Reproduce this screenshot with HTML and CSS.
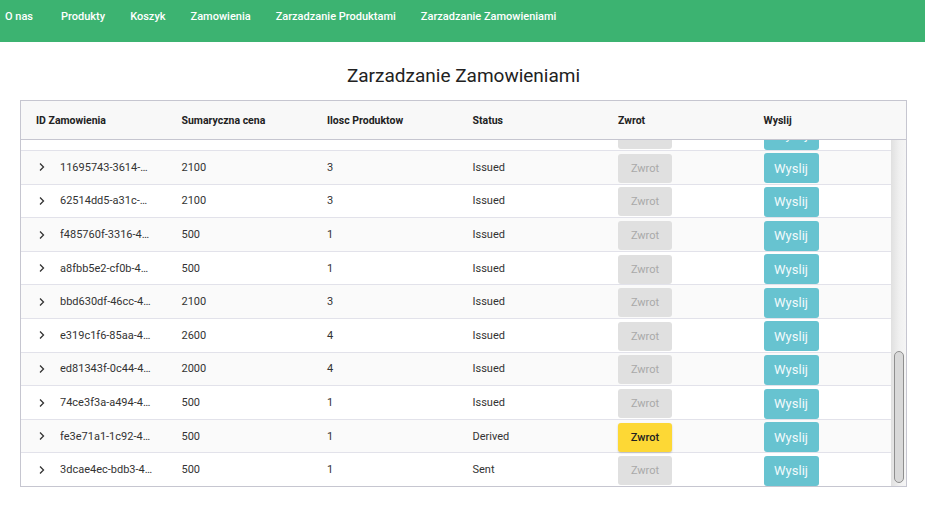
FILE: index.html
```html
<!DOCTYPE html>
<html lang="pl">
<head>
<meta charset="utf-8">
<title>Zarzadzanie Zamowieniami</title>
<link rel="stylesheet" href="styles.css">
</head>
<body>
<nav class="nav">
  <a class="nav-item">O nas</a>
  <a class="nav-item">Produkty</a>
  <a class="nav-item">Koszyk</a>
  <a class="nav-item">Zamowienia</a>
  <a class="nav-item">Zarzadzanie Produktami</a>
  <a class="nav-item">Zarzadzanie Zamowieniami</a>
</nav>
<main class="main">
  <h1 class="title">Zarzadzanie Zamowieniami</h1>
  <div class="table">
    <div class="thead">
      <div class="th">ID Zamowienia</div>
      <div class="th">Sumaryczna cena</div>
      <div class="th">Ilosc Produktow</div>
      <div class="th">Status</div>
      <div class="th">Zwrot</div>
      <div class="th">Wyslij</div>
    </div>
    <div class="tbody">
    <div class="rows" id="rows">
      <div class="row"><div class="td id"><svg class="chev" viewBox="0 0 8 10"><path d="M2 1.5 L5.5 5 L2 8.5"/></svg><span class="uuid">0a1b2c3d-1111-4a1a-9b1b-000000000001</span></div><div class="td">500</div><div class="td">1</div><div class="td">Issued</div><div class="td"><button class="btn zwrot" disabled>Zwrot</button></div><div class="td"><button class="btn wyslij">Wyslij</button></div></div>
      <div class="row"><div class="td id"><svg class="chev" viewBox="0 0 8 10"><path d="M2 1.5 L5.5 5 L2 8.5"/></svg><span class="uuid">5c9e2a10-2b7d-4f11-8c3a-000000000002</span></div><div class="td">2100</div><div class="td">3</div><div class="td">Issued</div><div class="td"><button class="btn zwrot" disabled>Zwrot</button></div><div class="td"><button class="btn wyslij">Wyslij</button></div></div>
      <div class="row"><div class="td id"><svg class="chev" viewBox="0 0 8 10"><path d="M2 1.5 L5.5 5 L2 8.5"/></svg><span class="uuid">9d44f0ab-77c2-4e0e-a1d1-000000000003</span></div><div class="td">2000</div><div class="td">4</div><div class="td">Issued</div><div class="td"><button class="btn zwrot" disabled>Zwrot</button></div><div class="td"><button class="btn wyslij">Wyslij</button></div></div>
      <div class="row"><div class="td id"><svg class="chev" viewBox="0 0 8 10"><path d="M2 1.5 L5.5 5 L2 8.5"/></svg><span class="uuid">c3a81e77-0d5f-4b9c-9e2f-000000000004</span></div><div class="td">500</div><div class="td">1</div><div class="td">Issued</div><div class="td"><button class="btn zwrot" disabled>Zwrot</button></div><div class="td"><button class="btn wyslij">Wyslij</button></div></div>
      <div class="row"><div class="td id"><svg class="chev" viewBox="0 0 8 10"><path d="M2 1.5 L5.5 5 L2 8.5"/></svg><span class="uuid">2f6b9d03-e4a8-4c27-b6d0-000000000005</span></div><div class="td">2600</div><div class="td">4</div><div class="td">Issued</div><div class="td"><button class="btn zwrot" disabled>Zwrot</button></div><div class="td"><button class="btn wyslij">Wyslij</button></div></div>
      <div class="row"><div class="td id"><svg class="chev" viewBox="0 0 8 10"><path d="M2 1.5 L5.5 5 L2 8.5"/></svg><span class="uuid">71e0cc58-9a3b-4d60-8f14-000000000006</span></div><div class="td">2100</div><div class="td">3</div><div class="td">Issued</div><div class="td"><button class="btn zwrot" disabled>Zwrot</button></div><div class="td"><button class="btn wyslij">Wyslij</button></div></div>
      <div class="row"><div class="td id"><svg class="chev" viewBox="0 0 8 10"><path d="M2 1.5 L5.5 5 L2 8.5"/></svg><span class="uuid">b8d2a6f4-3c19-4a85-a7e3-000000000007</span></div><div class="td">500</div><div class="td">1</div><div class="td">Issued</div><div class="td"><button class="btn zwrot" disabled>Zwrot</button></div><div class="td"><button class="btn wyslij">Wyslij</button></div></div>
      <div class="row"><div class="td id"><svg class="chev" viewBox="0 0 8 10"><path d="M2 1.5 L5.5 5 L2 8.5"/></svg><span class="uuid">e5f7139a-6b02-4f3d-9c58-000000000008</span></div><div class="td">2000</div><div class="td">4</div><div class="td">Issued</div><div class="td"><button class="btn zwrot" disabled>Zwrot</button></div><div class="td"><button class="btn wyslij">Wyslij</button></div></div>
      <div class="row"><div class="td id"><svg class="chev" viewBox="0 0 8 10"><path d="M2 1.5 L5.5 5 L2 8.5"/></svg><span class="uuid">4a0c85e1-d7f6-4b41-b2c9-000000000009</span></div><div class="td">2100</div><div class="td">3</div><div class="td">Issued</div><div class="td"><button class="btn zwrot" disabled>Zwrot</button></div><div class="td"><button class="btn wyslij">Wyslij</button></div></div>
      <div class="row"><div class="td id"><svg class="chev" viewBox="0 0 8 10"><path d="M2 1.5 L5.5 5 L2 8.5"/></svg><span class="uuid">83b6e2d7-5a4e-4c92-8d07-000000000010</span></div><div class="td">500</div><div class="td">1</div><div class="td">Issued</div><div class="td"><button class="btn zwrot" disabled>Zwrot</button></div><div class="td"><button class="btn wyslij">Wyslij</button></div></div>
      <div class="row"><div class="td id"><svg class="chev" viewBox="0 0 8 10"><path d="M2 1.5 L5.5 5 L2 8.5"/></svg><span class="uuid">d1f94b6c-08e3-4a7f-a5b2-000000000011</span></div><div class="td">2600</div><div class="td">4</div><div class="td">Issued</div><div class="td"><button class="btn zwrot" disabled>Zwrot</button></div><div class="td"><button class="btn wyslij">Wyslij</button></div></div>
      <div class="row"><div class="td id"><svg class="chev" viewBox="0 0 8 10"><path d="M2 1.5 L5.5 5 L2 8.5"/></svg><span class="uuid">0e7a3c59-f1b8-4d26-9e6a-000000000012</span></div><div class="td">2100</div><div class="td">3</div><div class="td">Issued</div><div class="td"><button class="btn zwrot" disabled>Zwrot</button></div><div class="td"><button class="btn wyslij">Wyslij</button></div></div>
      <div class="row"><div class="td id"><svg class="chev" viewBox="0 0 8 10"><path d="M2 1.5 L5.5 5 L2 8.5"/></svg><span class="uuid">6c25d8a0-4e9f-4b13-8a74-000000000013</span></div><div class="td">500</div><div class="td">1</div><div class="td">Issued</div><div class="td"><button class="btn zwrot" disabled>Zwrot</button></div><div class="td"><button class="btn wyslij">Wyslij</button></div></div>
      <div class="row"><div class="td id"><svg class="chev" viewBox="0 0 8 10"><path d="M2 1.5 L5.5 5 L2 8.5"/></svg><span class="uuid">a9e31f46-c2d5-4e80-b3f9-000000000014</span></div><div class="td">2000</div><div class="td">4</div><div class="td">Issued</div><div class="td"><button class="btn zwrot" disabled>Zwrot</button></div><div class="td"><button class="btn wyslij">Wyslij</button></div></div>
      <div class="row"><div class="td id"><svg class="chev" viewBox="0 0 8 10"><path d="M2 1.5 L5.5 5 L2 8.5"/></svg><span class="uuid">f3b08d72-1a6c-4f5e-9d21-000000000015</span></div><div class="td">2100</div><div class="td">3</div><div class="td">Issued</div><div class="td"><button class="btn zwrot" disabled>Zwrot</button></div><div class="td"><button class="btn wyslij">Wyslij</button></div></div>
      <div class="row"><div class="td id"><svg class="chev" viewBox="0 0 8 10"><path d="M2 1.5 L5.5 5 L2 8.5"/></svg><span class="uuid">58c4e9b1-7d30-4a6b-8c45-000000000016</span></div><div class="td">500</div><div class="td">1</div><div class="td">Issued</div><div class="td"><button class="btn zwrot" disabled>Zwrot</button></div><div class="td"><button class="btn wyslij">Wyslij</button></div></div>
      <div class="row"><div class="td id"><svg class="chev" viewBox="0 0 8 10"><path d="M2 1.5 L5.5 5 L2 8.5"/></svg><span class="uuid">2d7f6a38-b95e-4c09-a1d8-000000000017</span></div><div class="td">2600</div><div class="td">4</div><div class="td">Issued</div><div class="td"><button class="btn zwrot" disabled>Zwrot</button></div><div class="td"><button class="btn wyslij">Wyslij</button></div></div>
      <div class="row"><div class="td id"><svg class="chev" viewBox="0 0 8 10"><path d="M2 1.5 L5.5 5 L2 8.5"/></svg><span class="uuid">11695743-3614-4d2a-9b3c-000000000018</span></div><div class="td">2100</div><div class="td">3</div><div class="td">Issued</div><div class="td"><button class="btn zwrot" disabled>Zwrot</button></div><div class="td"><button class="btn wyslij">Wyslij</button></div></div>
      <div class="row"><div class="td id"><svg class="chev" viewBox="0 0 8 10"><path d="M2 1.5 L5.5 5 L2 8.5"/></svg><span class="uuid">62514dd5-a31c-4e77-8f0a-000000000019</span></div><div class="td">2100</div><div class="td">3</div><div class="td">Issued</div><div class="td"><button class="btn zwrot" disabled>Zwrot</button></div><div class="td"><button class="btn wyslij">Wyslij</button></div></div>
      <div class="row"><div class="td id"><svg class="chev" viewBox="0 0 8 10"><path d="M2 1.5 L5.5 5 L2 8.5"/></svg><span class="uuid">f485760f-3316-4b8e-a2c1-000000000020</span></div><div class="td">500</div><div class="td">1</div><div class="td">Issued</div><div class="td"><button class="btn zwrot" disabled>Zwrot</button></div><div class="td"><button class="btn wyslij">Wyslij</button></div></div>
      <div class="row"><div class="td id"><svg class="chev" viewBox="0 0 8 10"><path d="M2 1.5 L5.5 5 L2 8.5"/></svg><span class="uuid">a8fbb5e2-cf0b-4c3d-9e5f-000000000021</span></div><div class="td">500</div><div class="td">1</div><div class="td">Issued</div><div class="td"><button class="btn zwrot" disabled>Zwrot</button></div><div class="td"><button class="btn wyslij">Wyslij</button></div></div>
      <div class="row"><div class="td id"><svg class="chev" viewBox="0 0 8 10"><path d="M2 1.5 L5.5 5 L2 8.5"/></svg><span class="uuid">bbd630df-46cc-4a91-b7d2-000000000022</span></div><div class="td">2100</div><div class="td">3</div><div class="td">Issued</div><div class="td"><button class="btn zwrot" disabled>Zwrot</button></div><div class="td"><button class="btn wyslij">Wyslij</button></div></div>
      <div class="row"><div class="td id"><svg class="chev" viewBox="0 0 8 10"><path d="M2 1.5 L5.5 5 L2 8.5"/></svg><span class="uuid">e319c1f6-85aa-4f02-8d6e-000000000023</span></div><div class="td">2600</div><div class="td">4</div><div class="td">Issued</div><div class="td"><button class="btn zwrot" disabled>Zwrot</button></div><div class="td"><button class="btn wyslij">Wyslij</button></div></div>
      <div class="row"><div class="td id"><svg class="chev" viewBox="0 0 8 10"><path d="M2 1.5 L5.5 5 L2 8.5"/></svg><span class="uuid">ed81343f-0c44-4b6a-9a13-000000000024</span></div><div class="td">2000</div><div class="td">4</div><div class="td">Issued</div><div class="td"><button class="btn zwrot" disabled>Zwrot</button></div><div class="td"><button class="btn wyslij">Wyslij</button></div></div>
      <div class="row"><div class="td id"><svg class="chev" viewBox="0 0 8 10"><path d="M2 1.5 L5.5 5 L2 8.5"/></svg><span class="uuid">74ce3f3a-a494-4e58-b0c7-000000000025</span></div><div class="td">500</div><div class="td">1</div><div class="td">Issued</div><div class="td"><button class="btn zwrot" disabled>Zwrot</button></div><div class="td"><button class="btn wyslij">Wyslij</button></div></div>
      <div class="row"><div class="td id"><svg class="chev" viewBox="0 0 8 10"><path d="M2 1.5 L5.5 5 L2 8.5"/></svg><span class="uuid">fe3e71a1-1c92-4d85-a6f3-000000000026</span></div><div class="td">500</div><div class="td">1</div><div class="td">Derived</div><div class="td"><button class="btn zwrot active">Zwrot</button></div><div class="td"><button class="btn wyslij">Wyslij</button></div></div>
      <div class="row"><div class="td id"><svg class="chev" viewBox="0 0 8 10"><path d="M2 1.5 L5.5 5 L2 8.5"/></svg><span class="uuid">3dcae4ec-bdb3-4a2f-9c61-000000000027</span></div><div class="td">500</div><div class="td">1</div><div class="td">Sent</div><div class="td"><button class="btn zwrot" disabled>Zwrot</button></div><div class="td"><button class="btn wyslij">Wyslij</button></div></div>
    </div>
    <div class="scrollbar"><div class="thumb"></div></div>
    </div>
  </div>
</main>
<script src="script.js"></script>
</body>
</html>
```

FILE: styles.css
```css
* { box-sizing: border-box; }
html, body { margin: 0; padding: 0; }
body {
  font-family: Roboto, "Liberation Sans", sans-serif;
  color: #333;
  background: #fff;
}
.nav {
  height: 42px;
  background: #3cb371;
  display: flex;
  align-items: flex-start;
  gap: 25px;
  padding: 9px 0 0 5px;
}
.nav-item {
  color: #fff;
  font-size: 11px;
  font-weight: 500;
  line-height: 16px;
  text-decoration: none;
}
.nav-item:first-child { margin-right: 3px; }
.main {
  padding: 0 18px 0 20px;
}
.title {
  margin: 0;
  padding: 22px 0 12px;
  text-align: center;
  font-size: 19px;
  font-weight: 400;
  line-height: 24px;
  color: #222;
}
.table {
  width: 887px;
  border: 1px solid #c6c6d0;
  background: #fff;
}
.thead {
  display: grid;
  grid-template-columns: repeat(6, 145.5px);
  height: 39px;
  background: #f8f8f8;
  border-bottom: 1px solid #c6c6d0;
}
.th {
  padding-left: 15px;
  font-size: 10.5px;
  font-weight: 700;
  color: #222;
  display: flex;
  align-items: center;
}
.tbody {
  display: flex;
  height: 346px;
}
.rows {
  flex: 1;
  min-width: 0;
  overflow: hidden;
}
.scrollbar {
  width: 15px;
  flex: none;
  background: linear-gradient(to right, #e0e0e0, #f0f0f0 55%, #f5f5f5);
  padding: 211px 2px 0 3px;
}
.thumb {
  height: 132px;
  background: #d9d9d9;
  border: 1px solid #8f8f8f;
  border-radius: 5px;
}
.row {
  display: grid;
  grid-template-columns: repeat(6, 145.5px);
  height: 33.6px;
  border-top: 1px solid #e2e2ea;
}
.row:nth-child(even) { background: #fafafa; }
.td {
  padding-left: 15px;
  font-size: 11px;
  color: #333;
  display: flex;
  align-items: center;
  min-width: 0;
}
.td.id { padding-left: 17px; }
.chev {
  width: 8px;
  height: 10px;
  margin-right: 14px;
  flex: none;
}
.chev path {
  fill: none;
  stroke: #333;
  stroke-width: 1.3;
}
.uuid {
  width: 93px;
  overflow: hidden;
  white-space: nowrap;
  text-overflow: ellipsis;
}
.btn {
  font-family: Roboto, "Liberation Sans", sans-serif;
  border: none;
  border-radius: 3px;
  padding: 0;
  margin-top: 2px;
}
.zwrot {
  width: 54px;
  height: 29px;
  font-size: 11px;
  background: #e0e0e0;
  color: #a9a9a9;
}
.zwrot.active {
  background: #fdd835;
  color: #222;
  font-weight: 500;
  box-shadow: 0 1px 2px rgba(0,0,0,0.2);
}
.wyslij {
  width: 55px;
  height: 30px;
  font-size: 13px;
  background: #67c3d0;
  color: #f2fafc;
}
```

FILE: script.js
```js
var rows = document.getElementById('rows');
rows.scrollTop = rows.scrollHeight;
```
